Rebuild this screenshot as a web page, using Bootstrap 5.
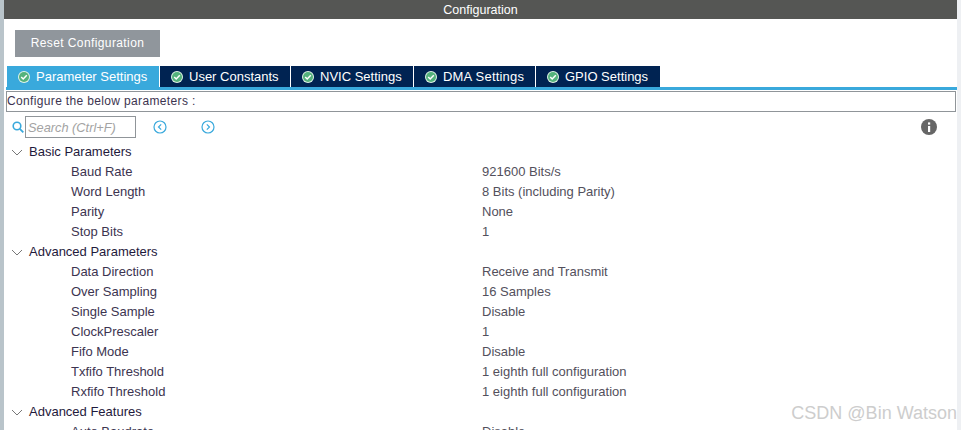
<!DOCTYPE html>
<html lang="en">
<head>
    <meta charset="UTF-8">
    <meta name="viewport" content="width=device-width, initial-scale=1.0">
    <title>Configuration</title>
    <link href="https://cdn.jsdelivr.net/npm/bootstrap@5.3.0/dist/css/bootstrap.min.css" rel="stylesheet">
    <style>
        html, body { height: 430px; overflow: hidden; background: #fff; }
        body { font-family: "Liberation Sans", Arial, sans-serif; font-size: 13px; color: #3c3450; }
        .cfg-shell { height: 430px; position: relative; overflow: hidden; border-left: 4px solid #b9c4ca; border-right: 4px solid #eef0f3; }
        .cfg-title { height: 19px; background: #555654; color: #fff; font-size: 12.5px; line-height: 20px; text-align: center; }
        .cfg-reset { margin: 11px 0 0 11px; width: 145px; height: 27px; background: #90969c; color: #fff; border: 0; border-radius: 0; padding: 0; font-size: 12px; letter-spacing: .4px; line-height: 27px; }
        .cfg-tabs { margin: 9px 0 0 3px; height: 21px; }
        .cfg-tab { height: 21px; background: #002352; color: #fff; font-size: 13px; line-height: 21px; border-right: 1px solid #fff; gap: 6px; padding-left: 11px; white-space: nowrap; }
        .cfg-tab.is-on { background: #39a9dc; }
        .cfg-tab.is-wide { letter-spacing: .2px; }
        .cfg-tab svg { flex: none; }
        .cfg-rule { height: 3px; background: #39a9dc; margin-left: 2px; }
        .cfg-note { height: 21px; margin: 1px 1px 0 2px; border: 1px solid #909599; line-height: 18px; padding-left: 0; font-size: 12px; letter-spacing: .35px; }
        .cfg-tools { height: 24px; margin-top: 3px; padding: 0 20px 0 8px; }
        .cfg-search { width: 111px; height: 22px; margin-left: 1px; border: 1px solid #909599; border-radius: 0; padding: 0 2px; font-size: 12.8px; font-style: italic; color: #a3a3a3; line-height: 20px; flex: none; }
        .cfg-search::placeholder { color: #a3a3a3; opacity: 1; }
        .cfg-prev { margin-left: 17px; }
        .cfg-next { margin-left: 34px; }
        .cfg-tree { margin-top: 3px; }
        .cfg-row { height: 20px; line-height: 20px; }
        .cfg-group { color: #1f1a3c; padding-left: 25px; position: relative; }
        .cfg-group svg { position: absolute; left: 7px; top: 7px; }
        .cfg-name { width: 478px; padding-left: 67px; flex: none; }
        .cfg-value { color: #53505c; }
        .cfg-mark { position: absolute; right: 0; top: 403px; font-size: 18px; color: #cdcdcd; line-height: 20px; }
    </style>
</head>
<body>
    <div class="cfg-shell">
        <div class="cfg-title">Configuration</div>
        <button type="button" class="btn cfg-reset d-block">Reset Configuration</button>

        <div class="cfg-tabs d-flex">
            <div class="cfg-tab is-on d-flex align-items-center" style="width:153px"><svg width="12" height="12" viewBox="0 0 12 12"><circle cx="6" cy="6" r="6" fill="#dff3e6"/><circle cx="6" cy="6" r="5" fill="#54b27c"/><path d="M3.2 6l2 2 3.6-3.8" fill="none" stroke="#fff" stroke-width="1.5"/></svg>Parameter Settings</div>
            <div class="cfg-tab d-flex align-items-center" style="width:131px"><svg width="12" height="12" viewBox="0 0 12 12"><circle cx="6" cy="6" r="6" fill="#dff3e6"/><circle cx="6" cy="6" r="5" fill="#54b27c"/><path d="M3.2 6l2 2 3.6-3.8" fill="none" stroke="#fff" stroke-width="1.5"/></svg>User Constants</div>
            <div class="cfg-tab d-flex align-items-center" style="width:123px"><svg width="12" height="12" viewBox="0 0 12 12"><circle cx="6" cy="6" r="6" fill="#dff3e6"/><circle cx="6" cy="6" r="5" fill="#54b27c"/><path d="M3.2 6l2 2 3.6-3.8" fill="none" stroke="#fff" stroke-width="1.5"/></svg>NVIC Settings</div>
            <div class="cfg-tab is-wide d-flex align-items-center" style="width:122px"><svg width="12" height="12" viewBox="0 0 12 12"><circle cx="6" cy="6" r="6" fill="#dff3e6"/><circle cx="6" cy="6" r="5" fill="#54b27c"/><path d="M3.2 6l2 2 3.6-3.8" fill="none" stroke="#fff" stroke-width="1.5"/></svg>DMA Settings</div>
            <div class="cfg-tab d-flex align-items-center border-0" style="width:124px"><svg width="12" height="12" viewBox="0 0 12 12"><circle cx="6" cy="6" r="6" fill="#dff3e6"/><circle cx="6" cy="6" r="5" fill="#54b27c"/><path d="M3.2 6l2 2 3.6-3.8" fill="none" stroke="#fff" stroke-width="1.5"/></svg>GPIO Settings</div>
        </div>
        <div class="cfg-rule"></div>
        <div class="cfg-note">Configure the below parameters :</div>

        <div class="cfg-tools d-flex align-items-center">
            <svg width="12" height="12" viewBox="0 0 12 12"><circle cx="5" cy="5" r="3.8" fill="none" stroke="#39a9dc" stroke-width="1.6"/><path d="M7.8 7.8L11.3 11.3" stroke="#39a9dc" stroke-width="1.8"/></svg>
            <input type="text" class="form-control cfg-search" placeholder="Search (Ctrl+F)">
            <svg class="cfg-prev" width="14" height="14" viewBox="0 0 14 14"><circle cx="7" cy="7" r="6" fill="none" stroke="#39a9dc" stroke-width="1.2"/><path d="M8.2 4.3L5.5 7l2.7 2.7" fill="none" stroke="#39a9dc" stroke-width="1.2"/></svg>
            <svg class="cfg-next" width="14" height="14" viewBox="0 0 14 14"><circle cx="7" cy="7" r="6" fill="none" stroke="#39a9dc" stroke-width="1.2"/><path d="M5.8 4.3L8.5 7l-2.7 2.7" fill="none" stroke="#39a9dc" stroke-width="1.2"/></svg>
            <svg class="ms-auto" width="16" height="16" viewBox="0 0 16 16"><circle cx="8" cy="8" r="8" fill="#666"/><rect x="7" y="7" width="2.2" height="6" fill="#fff"/><rect x="7" y="3.4" width="2.2" height="2.2" fill="#fff"/></svg>
        </div>

        <div class="cfg-tree" id="tree"></div>
        <div class="cfg-mark">CSDN @Bin Watson</div>
    </div>

    <script src="https://cdn.jsdelivr.net/npm/bootstrap@5.3.0/dist/js/bootstrap.bundle.min.js"></script>
    <script>
        const grupos = [
            ['Basic Parameters', [['Baud Rate', '921600 Bits/s'], ['Word Length', '8 Bits (including Parity)'], ['Parity', 'None'], ['Stop Bits', '1']]],
            ['Advanced Parameters', [['Data Direction', 'Receive and Transmit'], ['Over Sampling', '16 Samples'], ['Single Sample', 'Disable'], ['ClockPrescaler', '1'], ['Fifo Mode', 'Disable'], ['Txfifo Threshold', '1 eighth full configuration'], ['Rxfifo Threshold', '1 eighth full configuration']]],
            ['Advanced Features', [['Auto Baudrate', 'Disable']]]
        ];
        const seta = '<svg width="12" height="7" viewBox="0 0 12 7"><path d="M1 1l5 5 5-5" fill="none" stroke="#777" stroke-width="1"/></svg>';
        let html = '';
        grupos.forEach(([nome, itens]) => {
            html += `<div class="cfg-row cfg-group">${seta}${nome}</div>`;
            itens.forEach(([a, b]) => {
                html += `<div class="cfg-row d-flex"><div class="cfg-name">${a}</div><div class="cfg-value">${b}</div></div>`;
            });
        });
        document.getElementById('tree').innerHTML = html;
    </script>
</body>
</html>
